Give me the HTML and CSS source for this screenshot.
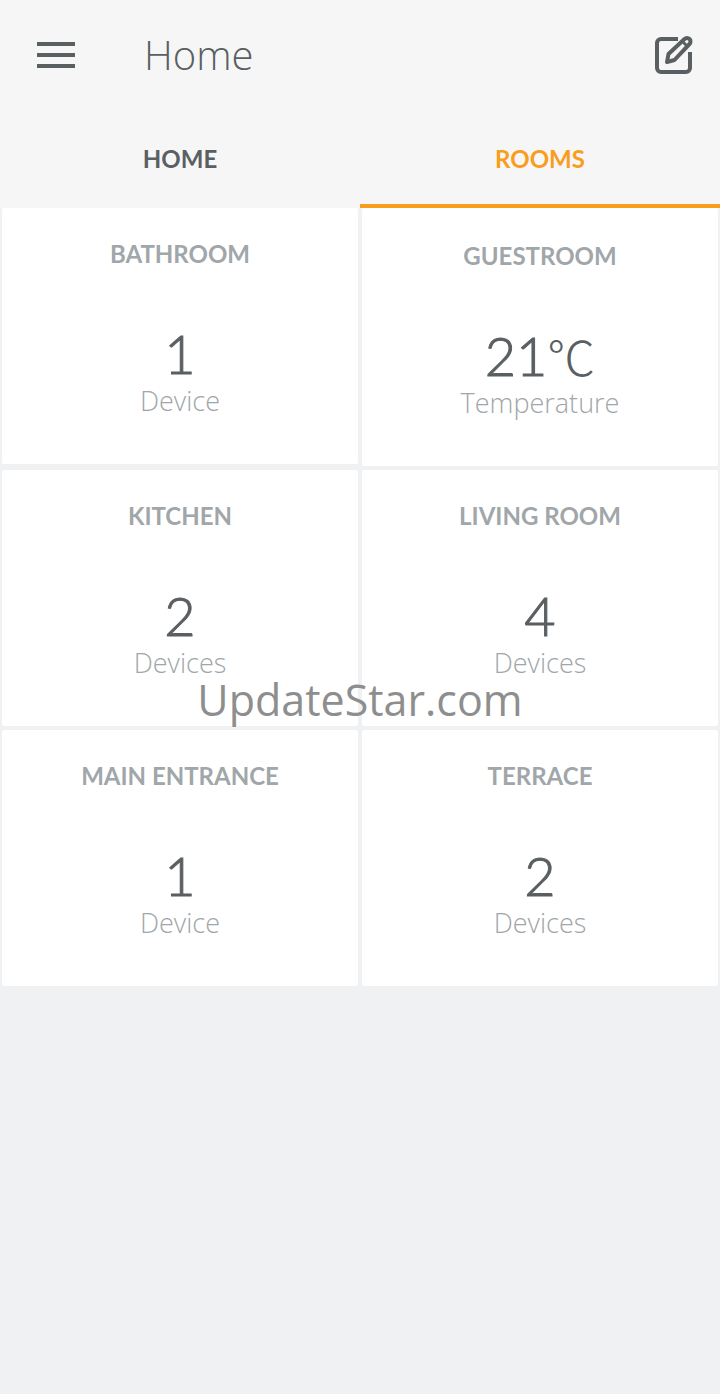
FILE: index.html
```html
<!DOCTYPE html>
<html lang="en">
<head>
    <meta charset="UTF-8">
    <meta name="viewport" content="width=device-width, initial-scale=1.0">
    <title>Home</title>
    <link rel="stylesheet" href="styles.css">
</head>
<body>
    <header class="topbar">
        <button class="icon-button" type="button" aria-label="Menu">
            <svg width="38" height="26" viewBox="0 0 38 26" fill="#5a5f62">
                <rect width="38" height="4"/>
                <rect y="11" width="38" height="4"/>
                <rect y="22" width="38" height="4"/>
            </svg>
        </button>
        <h1>Home</h1>
        <button class="icon-button edit" type="button" aria-label="Edit">
            <svg width="40" height="40" viewBox="0 0 40 40" fill="none" stroke="#5a5f62" stroke-width="4" stroke-linejoin="round">
                <path d="M25 4H8a4 4 0 0 0-4 4v25a4 4 0 0 0 4 4h25a4 4 0 0 0 4-4V17"/>
                <path d="M14 27l1.500-8L31.500 4a3.600 3.600 0 0 1 5 0a3.600 3.600 0 0 1 0 5L21.500 25z"/>
                <path d="M29 6l6 6" stroke-width="3"/>
            </svg>
        </button>
    </header>

    <nav class="tabs">
        <a href="#home">Home</a>
        <a href="#rooms" class="active">Rooms</a>
    </nav>

    <main class="rooms">
        <section class="card">
            <h2>Bathroom</h2>
            <p class="value">1</p>
            <p class="label">Device</p>
        </section>
        <section class="card climate">
            <h2>Guestroom</h2>
            <p class="value">21<span class="unit">℃</span></p>
            <p class="label">Temperature</p>
        </section>
        <section class="card">
            <h2>Kitchen</h2>
            <p class="value">2</p>
            <p class="label">Devices</p>
        </section>
        <section class="card">
            <h2>Living room</h2>
            <p class="value">4</p>
            <p class="label">Devices</p>
        </section>
        <section class="card">
            <h2>Main entrance</h2>
            <p class="value">1</p>
            <p class="label">Device</p>
        </section>
        <section class="card">
            <h2>Terrace</h2>
            <p class="value">2</p>
            <p class="label">Devices</p>
        </section>
    </main>

    <div class="watermark">UpdateStar.com</div>
</body>
</html>
```
FILE: styles.css
```css
* {
    box-sizing: border-box;
}

body {
    position: relative;
    min-height: 100vh;
    margin: 0;
    font-family: Lato, "Noto Sans CJK SC", sans-serif;
    background: #eff1f3;
    color: #5a5f62;
}

h1, h2, p {
    margin: 0;
}

.topbar {
    display: flex;
    align-items: center;
    height: 110px;
    padding: 0 27px 0 37px;
    background: #f6f6f7;
}

.topbar h1 {
    margin-left: 69px;
    font-family: "Open Sans", sans-serif;
    font-size: 40px;
    font-weight: 300;
    line-height: 48px;
}

.icon-button {
    padding: 0;
    border: none;
    background: none;
    cursor: pointer;
}

.icon-button svg {
    display: block;
}

.edit {
    margin-left: auto;
}

.tabs {
    display: grid;
    grid-template-columns: 1fr 1fr;
    background: #f6f6f7;
}

.tabs a {
    height: 98px;
    border-bottom: 4px solid transparent;
    color: #5a5f62;
    font-size: 24px;
    font-weight: 700;
    line-height: 98px;
    text-align: center;
    text-decoration: none;
    text-transform: uppercase;
}

.tabs .active {
    border-color: #f99d1c;
    color: #f99d1c;
}

.rooms {
    display: grid;
    grid-template-columns: 1fr 1fr;
    align-items: start;
    gap: 4px;
    padding: 0 2px;
}

.card {
    height: 256px;
    padding-top: 30px;
    border-radius: 2px;
    background: #fff;
    text-align: center;
}

.card.climate {
    height: 258px;
    padding-top: 32px;
}

.card h2 {
    color: #a0a6a9;
    font-size: 24px;
    font-weight: 700;
    line-height: 32px;
    text-transform: uppercase;
}

.value {
    height: 64px;
    margin-top: 52px;
    font-size: 54px;
    font-weight: 300;
    line-height: 64px;
    -webkit-text-stroke: 1px;
}

.unit {
    font-family: "Noto Sans CJK SC", sans-serif;
    font-size: 48px;
    font-weight: 300;
    line-height: 48px;
    -webkit-text-stroke: 0;
}

.label {
    color: #a0a6a9;
    font-family: "Open Sans", sans-serif;
    font-size: 27px;
    font-weight: 300;
    line-height: 30px;
}

.watermark {
    position: absolute;
    top: 676px;
    left: 0;
    right: 0;
    color: #8e8e8e;
    font-family: "Open Sans", sans-serif;
    font-size: 43px;
    line-height: 48px;
    text-align: center;
    pointer-events: none;
}
```
